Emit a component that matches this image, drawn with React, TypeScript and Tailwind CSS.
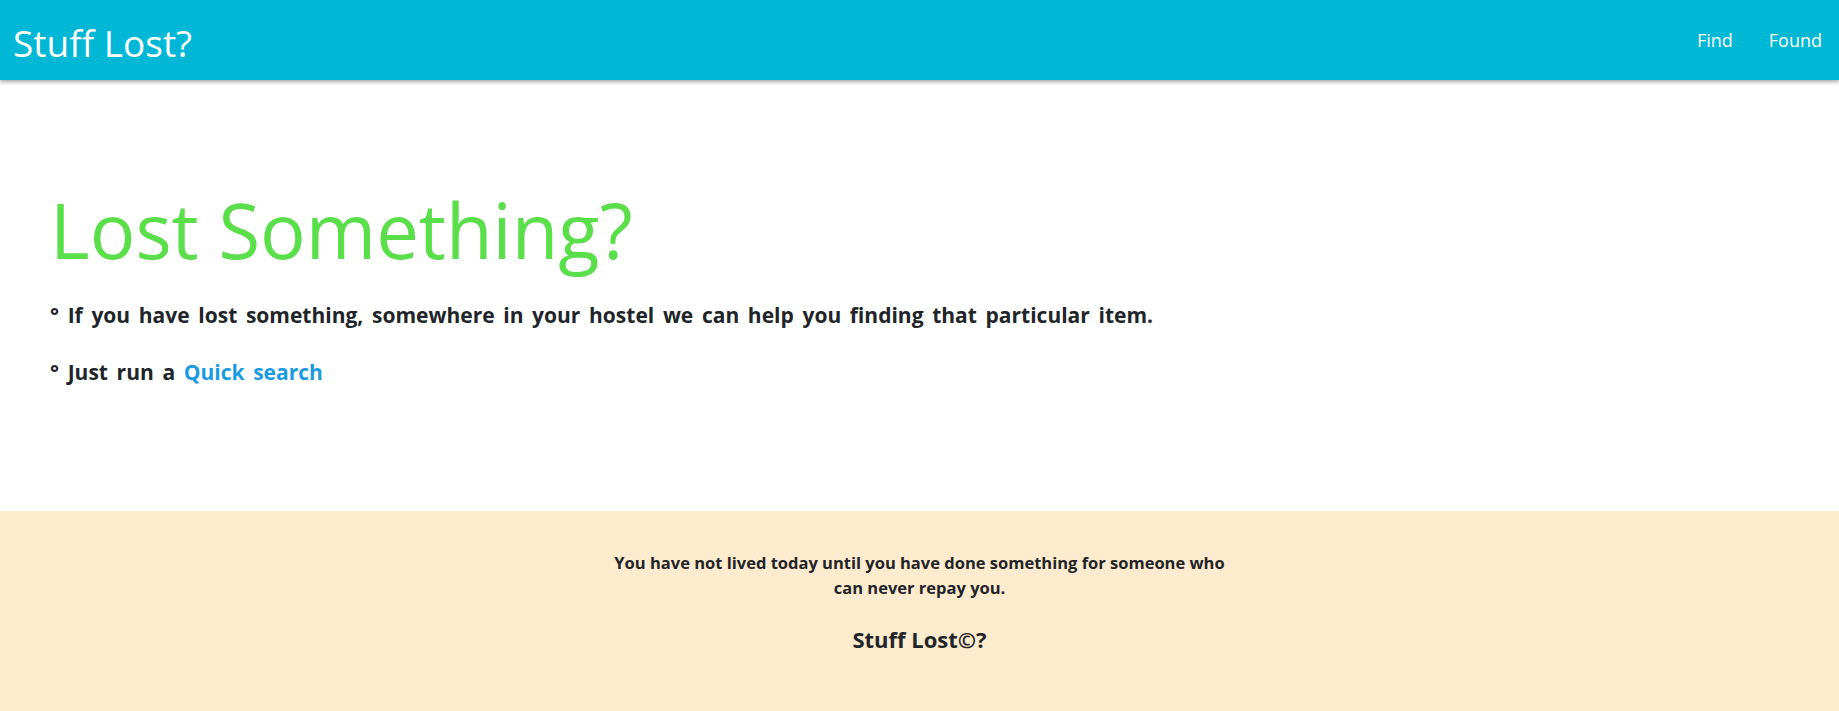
import React from "react";

const fontStack = '"Open Sans", "Noto Sans", sans-serif';

export default function App() {
  return (
    <div className="min-h-[711px] flex flex-col bg-white" style={{ fontFamily: fontStack }}>
      <nav className="h-20 shrink-0 bg-[#00b8d5] flex items-center justify-between pl-[13px] pr-[17px] shadow-[0_2px_4px_rgba(0,0,0,0.35)] relative z-10">
        <span className="pt-[5px] text-white text-[37px] font-normal leading-[1.5]">Stuff Lost?</span>
        <div className="flex gap-[36px] text-white text-[18px] leading-[27px]">
          <a href="#">Find</a>
          <a href="#">Found</a>
        </div>
      </nav>
      <main className="flex-1 px-[50px] pt-[104px]">
        <h1 className="text-[76px] font-normal text-[#5adf4a] leading-[1.2]">Lost Something?</h1>
        <p className="mt-[25px] text-[21px] leading-[1.5] font-bold text-[#212529] [word-spacing:3.2px]">
          ° If you have lost something, somewhere in your hostel we can help you finding that particular item.
        </p>
        <p className="mt-[25px] text-[21px] leading-[1.5] font-bold text-[#212529] [word-spacing:3.2px]">
          ° Just run a <a href="#" className="text-[#1a9be0]">Quick search</a>
        </p>
      </main>
      <footer className="bg-[#ffebcd] h-[200px] shrink-0 flex flex-col items-center pt-[39px]">
        <p className="max-w-[630px] text-center text-[16.5px] leading-[25px] font-bold text-[#212529]">
          You have not lived today until you have done something for someone who can never repay you.
        </p>
        <p className="mt-[23px] text-[22px] leading-[1.5] font-bold text-[#212529]">Stuff Lost©?</p>
      </footer>
    </div>
  );
}
